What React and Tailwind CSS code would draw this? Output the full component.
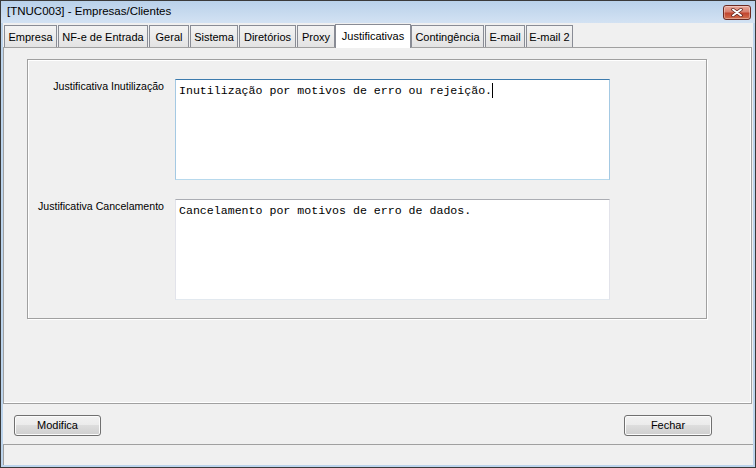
import React from 'react';

const tabs = [
  { label: 'Empresa', cls: 'ml-px w-[53px]' },
  { label: 'NF-e de Entrada', cls: 'ml-px w-[90px]' },
  { label: 'Geral', cls: 'ml-px w-[40px]' },
  { label: 'Sistema', cls: 'ml-px w-[48px]' },
  { label: 'Diretórios', cls: 'ml-px w-[57px]' },
  { label: 'Proxy', cls: 'ml-px w-[38px]' },
  { label: 'Justificativas', cls: 'w-[76px]', active: true },
  { label: 'Contingência', cls: 'w-[73px]' },
  { label: 'E-mail', cls: 'ml-px w-[40px]' },
  { label: 'E-mail 2', cls: 'ml-px w-[47px]' },
];

function CloseButton() {
  return (
    <div className="w-[28px] h-[15px] rounded-[3px] border border-[#6b2a22] bg-[linear-gradient(#e9a99b_0%,#d7806f_45%,#c2452f_55%,#d2704f_100%)] shadow-[inset_0_0_0_1px_rgba(255,255,255,0.35)] flex items-center justify-center">
      <svg width="12" height="9" viewBox="0 0 12 9">
        <path d="M2 1.5 L10 7.5 M10 1.5 L2 7.5" stroke="#5a1f18" strokeWidth="3.4" strokeLinecap="round" />
        <path d="M2 1.5 L10 7.5 M10 1.5 L2 7.5" stroke="#ffffff" strokeWidth="2" strokeLinecap="round" />
      </svg>
    </div>
  );
}

function WinButton({ children, cls }) {
  return (
    <button className={`h-[21px] rounded-[3px] border border-[#707070] bg-[linear-gradient(#f2f2f2_0%,#ebebeb_50%,#dddddd_50%,#cfcfcf_100%)] shadow-[inset_0_0_0_1px_#fbfbfb] text-[11px] text-black leading-none ${cls}`}>
      {children}
    </button>
  );
}

function Field({ label, text, focused }) {
  return (
    <div className="flex">
      <div className="w-[136px] pt-[1px] text-right text-[10.6px] leading-[13px] text-black">{label}</div>
      <div
        className={`ml-[11px] w-[435px] h-[101px] bg-white border pl-[3px] pt-[3px] font-['Liberation_Mono',monospace] text-[11.6px] leading-[15px] text-black ${
          focused
            ? 'border-[#a4c9e3] border-t-[#3d7bad] border-b-[#b7d9ed]'
            : 'border-[#e2e3ea] border-t-[#abadb3] border-b-[#e3e9ef]'
        }`}
      >
        {text}
        {focused && <span className="inline-block w-px h-[15px] bg-black align-top" />}
      </div>
    </div>
  );
}

export default function App() {
  return (
    <div className="w-[756px] h-[468px] border border-[#3a3a3a] bg-[#bcd4ec] flex flex-col font-['Liberation_Sans',Arial,sans-serif] overflow-hidden">
      <div className="h-[22px] shrink-0 bg-[linear-gradient(#b9d1ea,#d3e2f3)] flex items-center justify-between pl-[6px] pr-[4px]">
        <span className="text-[11.5px] text-black">[TNUC003] - Empresas/Clientes</span>
        <CloseButton />
      </div>

      <div className="flex-1 mx-[2px] mb-[2px] bg-[#f0f0f0] flex flex-col">
        <div className="h-[24px] flex items-end">
          {tabs.map(t =>
            t.active ? (
              <div
                key={t.label}
                className={`relative z-10 h-[24px] -mb-px bg-white border border-b-0 border-[#898c95] flex items-center justify-center text-[11px] text-black ${t.cls}`}
              >
                {t.label}
              </div>
            ) : (
              <div
                key={t.label}
                className={`h-[22px] bg-[linear-gradient(#f3f3f3,#e3e3e3)] border border-b-0 border-[#898c95] flex items-center justify-center pt-[2px] text-[11px] text-black ${t.cls}`}
              >
                {t.label}
              </div>
            )
          )}
        </div>

        <div className="h-[357px] mr-px border border-[#a0a0a0] shadow-[inset_-1px_-1px_0_#ffffff] pl-[23px] pt-[11px]">
          <div className="w-[680px] h-[260px] border border-[#a0a0a0] shadow-[inset_1px_1px_0_#ffffff,1px_1px_0_#ffffff] pt-[19px] flex flex-col gap-[19px]">
            <Field
              label="Justificativa Inutilização"
              text="Inutilização por motivos de erro ou rejeição."
              focused
            />
            <Field label="Justificativa Cancelamento" text="Cancelamento por motivos de erro de dados." />
          </div>
        </div>

        <div className="h-[40px] flex items-start justify-between pl-[11px] pr-[41px] pt-[11px]">
          <WinButton cls="w-[87px]">Modifica</WinButton>
          <WinButton cls="w-[88px]">Fechar</WinButton>
        </div>

        <div className="flex-1 border-t border-l border-[#a0a0a0]" />
      </div>
    </div>
  );
}
